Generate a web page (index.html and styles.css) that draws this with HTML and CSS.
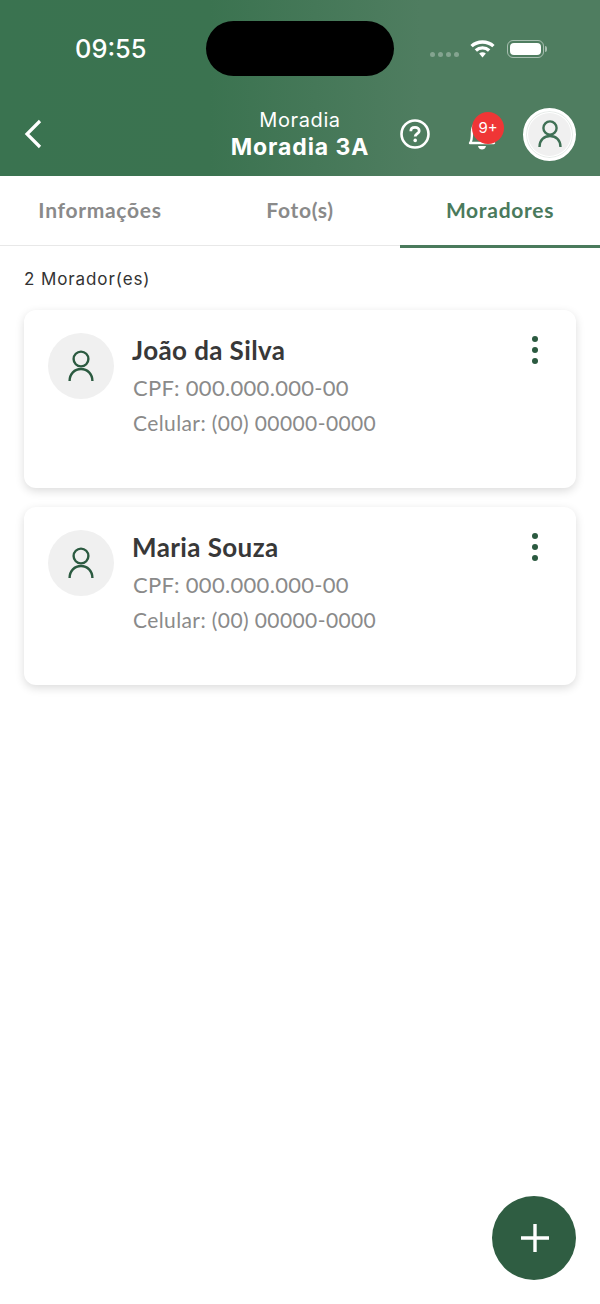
FILE: index.html
```html
<!DOCTYPE html>
<html lang="pt-BR">
<head>
    <meta charset="UTF-8">
    <meta name="viewport" content="width=device-width, initial-scale=1.0">
    <title>Moradia 3A</title>
    <link rel="stylesheet" href="styles.css">
</head>
<body>
    <div class="page">
        <header class="app-header">
            <div class="status-bar">
                <span class="status-time">09:55</span>
                <div class="status-island"></div>
                <div class="status-icons">
                    <div class="signal-dots"><i></i><i></i><i></i><i></i></div>
                    <svg class="wifi-icon" width="25" height="19" viewBox="0 0 26 20">
                        <path d="M1.5 7.5C7.8 1.6 18.2 1.6 24.5 7.5" fill="none" stroke="#fff" stroke-width="3.6"/>
                        <path d="M6 12C9.9 8.4 16.1 8.4 20 12" fill="none" stroke="#fff" stroke-width="3.6"/>
                        <path d="M9.5 15.2C11.5 13.4 14.5 13.4 16.5 15.2L13 19.5Z" fill="#fff"/>
                    </svg>
                    <div class="battery"><div class="battery-fill"></div></div>
                    <div class="battery-cap"></div>
                </div>
            </div>
            <div class="nav-bar">
                <div class="nav-left">
                    <svg width="18" height="30" viewBox="0 0 18 30">
                        <path d="M16 2L3 15L16 28" fill="none" stroke="#fff" stroke-width="3.2"/>
                    </svg>
                </div>
                <div class="nav-title">
                    <div class="nav-title-small">Moradia</div>
                    <div class="nav-title-big">Moradia 3A</div>
                </div>
                <div class="nav-actions">
                    <svg width="30" height="30" viewBox="0 0 30 30">
                        <circle cx="15" cy="15" r="13.5" fill="none" stroke="#fff" stroke-width="2.6"/>
                        <path d="M10.8 12.2C10.8 9.8 12.6 8.4 15 8.4C17.4 8.4 19.2 9.8 19.2 11.9C19.2 14.6 15.2 14.8 15.2 17.6" fill="none" stroke="#fff" stroke-width="2.8"/>
                        <circle cx="15.2" cy="21.4" r="1.8" fill="#fff"/>
                    </svg>
                    <div class="bell">
                        <svg width="30" height="36" viewBox="0 0 30 36">
                            <path d="M3 27C5 25 5 21 5 16C5 9 10 5 15 5C20 5 25 9 25 16C25 21 25 25 27 27Z" fill="none" stroke="#fff" stroke-width="2.4" stroke-linejoin="round"/>
                            <path d="M11 30H19C18.5 32.5 16.8 33.5 15 33.5C13.2 33.5 11.5 32.5 11 30Z" fill="#fff"/>
                        </svg>
                        <span class="bell-badge">9+</span>
                    </div>
                    <div class="user-avatar">
                        <svg width="24" height="28" viewBox="0 0 24 28">
                            <circle cx="12" cy="8" r="6.6" fill="none" stroke="#3f7055" stroke-width="2.4"/>
                            <path d="M1.5 27C1.5 20 6 16 12 16C18 16 22.5 20 22.5 27" fill="none" stroke="#3f7055" stroke-width="2.4"/>
                        </svg>
                    </div>
                </div>
            </div>
        </header>

        <nav class="tabs">
            <div class="tab">Informações</div>
            <div class="tab">Foto(s)</div>
            <div class="tab tab-active">Moradores</div>
        </nav>

        <main class="content">
            <div class="count">2 Morador(es)</div>

            <div class="card">
                <div class="card-avatar">
                    <svg width="26" height="32" viewBox="0 0 26 32">
                        <circle cx="13" cy="9" r="7.4" fill="none" stroke="#2b5a40" stroke-width="2.4"/>
                        <path d="M1.6 31C1.6 24 6.5 19 13 19C19.5 19 24.4 24 24.4 31" fill="none" stroke="#2b5a40" stroke-width="2.4"/>
                    </svg>
                </div>
                <div class="card-info">
                    <div class="card-name">João da Silva</div>
                    <div class="card-cpf">CPF: 000.000.000-00</div>
                    <div class="card-phone">Celular: (00) 00000-0000</div>
                </div>
                <div class="card-menu"><i></i><i></i><i></i></div>
            </div>

            <div class="card">
                <div class="card-avatar">
                    <svg width="26" height="32" viewBox="0 0 26 32">
                        <circle cx="13" cy="9" r="7.4" fill="none" stroke="#2b5a40" stroke-width="2.4"/>
                        <path d="M1.6 31C1.6 24 6.5 19 13 19C19.5 19 24.4 24 24.4 31" fill="none" stroke="#2b5a40" stroke-width="2.4"/>
                    </svg>
                </div>
                <div class="card-info">
                    <div class="card-name">Maria Souza</div>
                    <div class="card-cpf">CPF: 000.000.000-00</div>
                    <div class="card-phone">Celular: (00) 00000-0000</div>
                </div>
                <div class="card-menu"><i></i><i></i><i></i></div>
            </div>
        </main>

        <button class="fab">
            <svg width="30" height="30" viewBox="0 0 30 30">
                <path d="M15 1V29M1 15H29" fill="none" stroke="#fff" stroke-width="3.4"/>
            </svg>
        </button>
    </div>
</body>
</html>
```

FILE: styles.css
```css
* {
    box-sizing: border-box;
}
body {
    margin: 0;
    font-family: "Lato", "Liberation Sans", sans-serif;
    background-color: #fff;
}
.page {
    position: relative;
    width: 600px;
    height: 1304px;
    overflow: hidden;
}
.app-header {
    height: 176px;
    background: linear-gradient(90deg, #3a7350 0%, #3b7350 35%, #4f7d60 70%, #4f7d60 100%);
    color: #fff;
}
.status-bar {
    display: flex;
    height: 97px;
    padding: 21px 0 0 75px;
}
.status-time {
    width: 131px;
    margin-top: 12px;
    font-family: "Inter", sans-serif;
    font-size: 25.4px;
    font-weight: 500;
    line-height: 32px;
}
.status-island {
    width: 188px;
    height: 55px;
    background-color: #000;
    border-radius: 28px;
}
.status-icons {
    display: flex;
    align-items: center;
    height: 55px;
    margin-left: 36px;
}
.signal-dots {
    display: flex;
    gap: 3px;
    margin-top: 12px;
}
.signal-dots i {
    width: 5px;
    height: 5px;
    border-radius: 50%;
    background-color: rgba(255, 255, 255, 0.3);
}
.wifi-icon {
    margin-left: 11px;
}
.battery {
    width: 37px;
    height: 18px;
    margin-left: 12px;
    padding: 2px;
    border: 1px solid rgba(255, 255, 255, 0.5);
    border-radius: 6px;
}
.battery-fill {
    height: 100%;
    background-color: #fff;
    border-radius: 4px;
}
.battery-cap {
    width: 2px;
    height: 6px;
    margin-left: 1px;
    background-color: rgba(255, 255, 255, 0.5);
    border-radius: 0 2px 2px 0;
}
.nav-bar {
    display: grid;
    grid-template-columns: 1fr auto 1fr;
    align-items: center;
    height: 74px;
    padding: 0 24px;
}
.nav-left {
    display: flex;
    align-items: center;
}
.nav-title {
    padding-top: 1px;
    font-family: "Inter", sans-serif;
    text-align: center;
}
.nav-title-small {
    font-size: 20px;
    line-height: 24px;
    letter-spacing: 0.6px;
}
.nav-title-big {
    font-size: 23px;
    font-weight: 700;
    line-height: 30px;
    letter-spacing: 0.9px;
}
.nav-actions {
    display: flex;
    align-items: center;
    justify-content: flex-end;
}
.bell {
    position: relative;
    display: flex;
    margin-left: 37px;
}
.bell-badge {
    position: absolute;
    top: -4px;
    left: 5px;
    width: 32px;
    height: 32px;
    font-family: "Inter", sans-serif;
    font-size: 15px;
    line-height: 32px;
    text-align: center;
    color: #fff;
    background-color: #ef3636;
    border-radius: 50%;
}
.user-avatar {
    display: flex;
    align-items: center;
    justify-content: center;
    width: 53px;
    height: 53px;
    margin-left: 26px;
    background-color: #f0f0f0;
    border: 3px solid #fff;
    border-radius: 50%;
    box-shadow: inset 0 0 0 1px #e6ebe8, inset 0 0 0 2px #fff;
}
.tabs {
    display: flex;
    height: 70px;
    border-bottom: 1px solid #e8e8e8;
}
.tab {
    flex: 1;
    height: 70px;
    padding-top: 20px;
    font-size: 21px;
    font-weight: 700;
    line-height: 28px;
    text-align: center;
    letter-spacing: 0.7px;
    color: #8a8a8a;
}
.tab-active {
    height: 72px;
    color: #4a7a5c;
    border-bottom: 3px solid #4a7a5c;
}
.content {
    padding: 22px 24px 0;
}
.count {
    font-family: "Inter", sans-serif;
    font-size: 17px;
    line-height: 22px;
    letter-spacing: 0.9px;
    color: #333;
}
.card {
    display: flex;
    height: 178px;
    margin-top: 19px;
    padding: 23px 24px;
    background-color: #fff;
    border-radius: 12px;
    box-shadow: 0 3px 10px rgba(0, 0, 0, 0.14);
}
.count + .card {
    margin-top: 20px;
}
.card-avatar {
    display: flex;
    flex: none;
    align-items: center;
    justify-content: center;
    width: 66px;
    height: 66px;
    background-color: #f0f0f0;
    border-radius: 50%;
}
.card-info {
    flex: 1;
    padding-left: 18px;
}
.card-name {
    font-size: 26px;
    font-weight: 700;
    line-height: 34px;
    letter-spacing: 0.4px;
    color: #383838;
}
.card-cpf {
    margin-top: 6px;
    padding-left: 1px;
    font-size: 22px;
    line-height: 30px;
    letter-spacing: 0.3px;
    color: #8a8a8a;
}
.card-phone {
    margin-top: 6px;
    padding-left: 1px;
    font-size: 21px;
    line-height: 28px;
    letter-spacing: 0.4px;
    color: #8a8a8a;
}
.card-menu {
    display: flex;
    flex-direction: column;
    gap: 5px;
    margin: 3px 14px 0 0;
}
.card-menu i {
    width: 6px;
    height: 6px;
    background-color: #2b5a40;
    border-radius: 50%;
}
.fab {
    position: absolute;
    right: 24px;
    bottom: 24px;
    display: flex;
    align-items: center;
    justify-content: center;
    width: 84px;
    height: 84px;
    padding: 0 0 0 2px;
    background-color: #2f5d42;
    border: none;
    border-radius: 50%;
}
```
